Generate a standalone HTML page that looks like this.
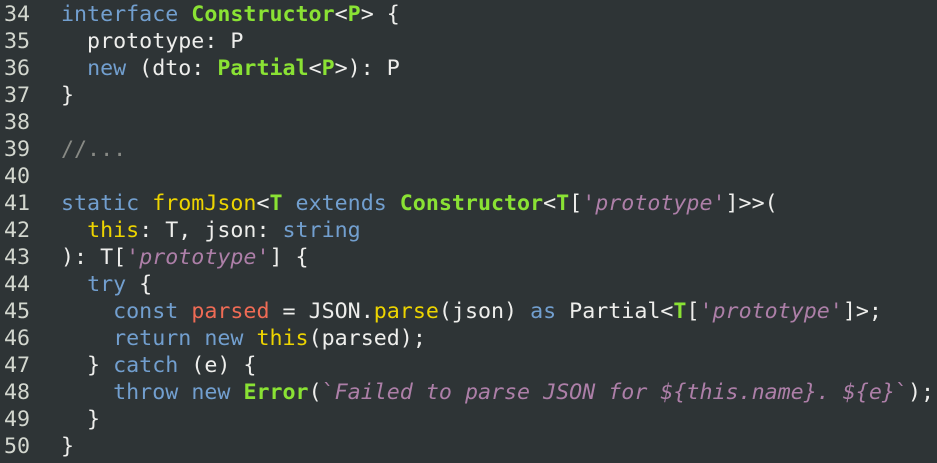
<!DOCTYPE html>
<html><head><style>
body{margin:0;width:937px;height:463px;background:#2e3436;overflow:hidden}
pre{margin:0;position:absolute;top:1px;font-family:"DejaVu Sans Mono","Liberation Mono",monospace;font-size:21.65px;line-height:27px;color:#eeeeec}
#n{left:4px;color:#d3d7cf}
#c{left:61px}
.k{color:#729fcf}.t{color:#8ae234;font-weight:bold}.s{color:#ad7fa8;font-style:italic}.q{color:#ad7fa8}
.f{color:#edd400}.v{color:#ef6b55}.c{color:#888a85}
</style></head><body>
<pre id="n">34
35
36
37
38
39
40
41
42
43
44
45
46
47
48
49
50</pre>
<pre id="c"><span class="k">interface</span> <span class="t">Constructor</span>&lt;<span class="t">P</span>&gt; {
  prototype: P
  <span class="k">new</span> (dto: <span class="t">Partial</span>&lt;<span class="t">P</span>&gt;): P
}

<span class="c">//...</span>

<span class="k">static</span> <span class="f">fromJson</span>&lt;<span class="t">T</span> <span class="k">extends</span> <span class="t">Constructor</span>&lt;<span class="t">T</span>[<span class="q">'</span><span class="s">prototype</span><span class="q">'</span>]&gt;&gt;(
  <span class="f">this</span>: T, json: <span class="k">string</span>
): T[<span class="q">'</span><span class="s">prototype</span><span class="q">'</span>] {
  <span class="k">try</span> {
    <span class="k">const</span> <span class="v">parsed</span> = JSON.<span class="f">parse</span>(json) <span class="k">as</span> Partial&lt;<span class="t">T</span>[<span class="q">'</span><span class="s">prototype</span><span class="q">'</span>]&gt;;
    <span class="k">return</span> <span class="k">new</span> <span class="f">this</span>(parsed);
  } <span class="k">catch</span> (e) {
    <span class="k">throw</span> <span class="k">new</span> <span class="t">Error</span>(<span class="q">`</span><span class="s">Failed to parse JSON for ${this.name}. ${e}</span><span class="q">`</span>);
  }
}</pre>
</body></html>
